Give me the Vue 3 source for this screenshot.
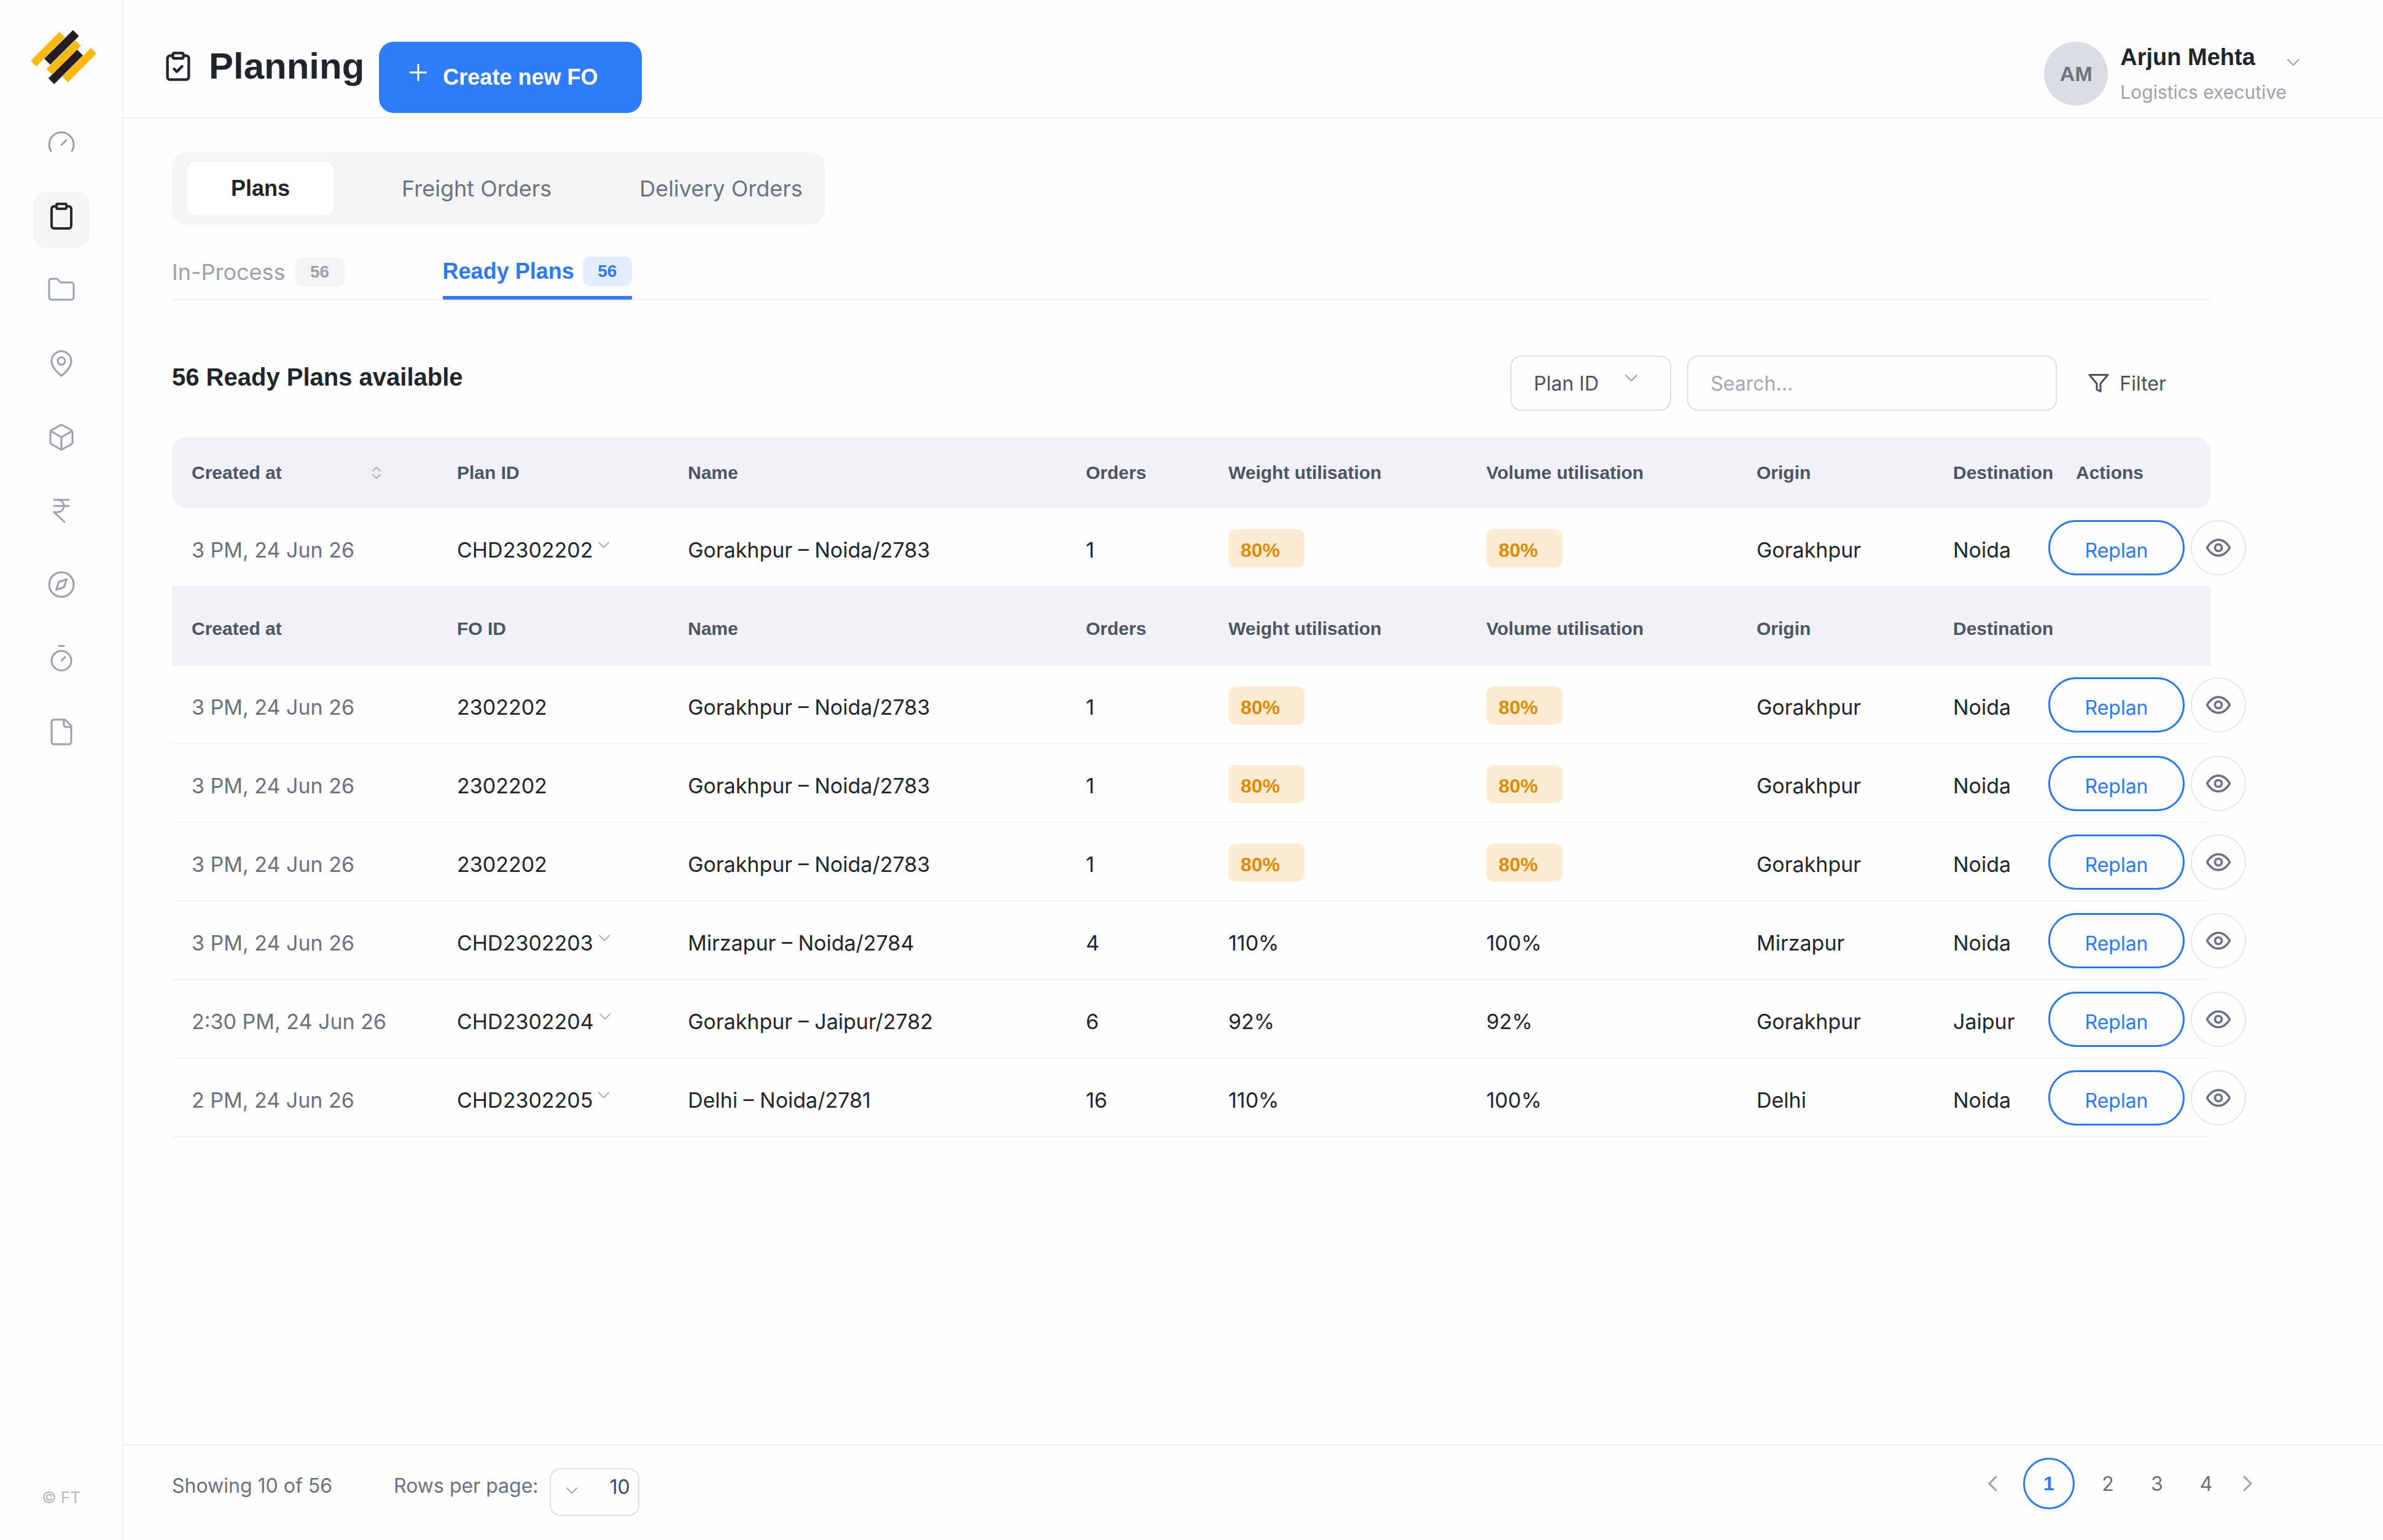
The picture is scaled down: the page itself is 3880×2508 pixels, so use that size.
<template>
  <div class="app">
    <aside class="sidebar">
      <a href="#" class="logo" aria-label="Home">
        <svg viewBox="50 45 320 263">
          <path fill="#fdb913" d="M190 54l27 26L77 222l-27-28z" />
          <path fill="#231f20" d="M256 45l29 29-140 139-29-29z" />
          <path fill="#231f20" d="M276 140l28 28-140 140-28-28z" />
          <path fill="#fdb913" d="M268 95l27 27-141 140-28-28z" />
          <path fill="#fdb913" d="M343 132l27 27-139 140-28-28z" />
        </svg>
      </a>
      <nav class="nav">
        <a
          v-for="item in navItems"
          :key="item.name"
          href="#"
          class="nav-item"
          :class="{ active: item.name === activeNav }"
          :aria-label="item.name"
          @click.prevent="activeNav = item.name"
        >
          <svg class="icon" viewBox="0 0 24 24">
            <path v-for="d in item.paths" :key="d" :d="d" />
          </svg>
        </a>
      </nav>
      <span class="copyright">© FT</span>
    </aside>

    <div class="main">
      <header class="header">
        <div class="title">
          <svg class="icon title-icon" viewBox="0 0 24 24">
            <path d="M9 2h6a1 1 0 0 1 1 1v2a1 1 0 0 1-1 1H9a1 1 0 0 1-1-1V3a1 1 0 0 1 1-1z" />
            <path d="M16 4h2a2 2 0 0 1 2 2v14a2 2 0 0 1-2 2H6a2 2 0 0 1-2-2V6a2 2 0 0 1 2-2h2" />
            <path d="M9 14l2 2 4-4" />
          </svg>
          <h1>Planning</h1>
        </div>
        <button type="button" class="create-btn">
          <svg class="plus" viewBox="0 0 28 28"><path d="M14 1v26M1 14h26" /></svg>
          Create new FO
        </button>
        <div class="user">
          <span class="avatar">AM</span>
          <div class="user-text">
            <strong>Arjun Mehta</strong>
            <span>Logistics executive</span>
          </div>
          <button type="button" class="user-toggle" aria-label="Account menu">
            <svg viewBox="0 0 22 12"><path d="M2 1l9 9 9-9" /></svg>
          </button>
        </div>
      </header>

      <main class="content">
        <div class="segments">
          <button
            v-for="s in segments"
            :key="s"
            type="button"
            :class="{ active: s === activeSegment }"
            @click="activeSegment = s"
          >{{ s }}</button>
        </div>

        <div class="tabs">
          <button
            v-for="t in tabs"
            :key="t.label"
            type="button"
            class="tab"
            :class="{ active: t.label === activeTab }"
            @click="activeTab = t.label"
          >
            {{ t.label }} <span class="count">{{ t.count }}</span>
          </button>
        </div>

        <div class="toolbar">
          <h2>56 Ready Plans available</h2>
          <div class="select-wrap">
            <select v-model="searchBy" aria-label="Search by">
              <option>Plan ID</option>
              <option>Name</option>
            </select>
            <svg viewBox="0 0 22 12"><path d="M2 1l9 9 9-9" /></svg>
          </div>
          <input v-model="search" type="text" class="search" placeholder="Search..." aria-label="Search" />
          <button type="button" class="filter-btn">
            <svg class="icon" viewBox="0 0 24 24"><path d="M22 3H2l8 9.46V19l4 2v-8.54L22 3z" /></svg>
            Filter
          </button>
        </div>

        <table class="plans">
          <colgroup>
            <col class="c-created" />
            <col class="c-id" />
            <col />
            <col class="c-orders" />
            <col class="c-weight" />
            <col class="c-volume" />
            <col class="c-origin" />
            <col class="c-dest" />
            <col class="c-actions" />
          </colgroup>
          <thead>
            <tr>
              <th>
                <span class="sortable">
                  Created at
                  <svg viewBox="0 0 16 22"><path d="M2 8l6-6 6 6M2 14l6 6 6-6" /></svg>
                </span>
              </th>
              <th>Plan ID</th>
              <th v-for="h in sharedHeads" :key="h">{{ h }}</th>
              <th class="actions-head">Actions</th>
            </tr>
          </thead>
          <tbody>
            <template v-for="plan in plans" :key="plan.id">
              <tr v-for="(row, i) in rowsOf(plan)" :key="i" :class="{ 'sub-head': row.head }">
                <template v-if="row.head">
                  <th>Created at</th>
                  <th>FO ID</th>
                  <th v-for="h in sharedHeads" :key="h">{{ h }}</th>
                  <th></th>
                </template>
                <template v-else>
                  <td class="muted">{{ row.created }}</td>
                  <td>
                    {{ row.id }}<button v-if="row.isPlan" type="button" class="expand" aria-label="Toggle freight orders" @click="plan.open = !plan.open">
                      <svg viewBox="0 0 22 12"><path d="M2 1l9 9 9-9" /></svg>
                    </button>
                  </td>
                  <td>{{ row.name }}</td>
                  <td>{{ row.orders }}</td>
                  <td :class="{ low: row.weight < 90 }"><span>{{ row.weight }}%</span></td>
                  <td :class="{ low: row.volume < 90 }"><span>{{ row.volume }}%</span></td>
                  <td>{{ row.origin }}</td>
                  <td>{{ row.destination }}</td>
                  <td class="actions-cell">
                    <div class="actions">
                      <button type="button" class="replan">Replan</button>
                      <button type="button" class="view" aria-label="View">
                        <svg class="icon" viewBox="0 0 24 24">
                          <path d="M2 12s3.5-7 10-7 10 7 10 7-3.500 7-10 7-10-7-10-7z" />
                          <circle cx="12" cy="12" r="3" />
                        </svg>
                      </button>
                    </div>
                  </td>
                </template>
              </tr>
            </template>
          </tbody>
        </table>
      </main>

      <footer class="footer">
        <div class="paging-info">
          <span>Showing 10 of 56</span>
          <label for="rows-per-page">Rows per page:</label>
          <div class="rows-wrap">
            <select id="rows-per-page" v-model="rowsPerPage">
              <option>10</option>
              <option>20</option>
            </select>
            <svg viewBox="0 0 22 12"><path d="M2 1l9 9 9-9" /></svg>
          </div>
        </div>
        <nav class="pagination" aria-label="Pages">
          <button type="button" class="step prev" aria-label="Previous page">
            <svg viewBox="0 0 16 26"><path d="M14 2L3 13l11 11" /></svg>
          </button>
          <button
            v-for="n in 4"
            :key="n"
            type="button"
            class="page"
            :class="{ current: n === page }"
            @click="page = n"
          >{{ n }}</button>
          <button type="button" class="step" aria-label="Next page">
            <svg viewBox="0 0 16 26"><path d="M2 2l11 11L2 24" /></svg>
          </button>
        </nav>
      </footer>
    </div>
  </div>
</template>

<script setup>
import { ref } from 'vue';

const activeNav = ref('Planning');
const activeSegment = ref('Plans');
const activeTab = ref('Ready Plans');
const searchBy = ref('Plan ID');
const search = ref('');
const rowsPerPage = ref('10');
const page = ref(1);

const navItems = [
  { name: 'Dashboard', paths: ['M12 14l4-4', 'M3.500 19a10 10 0 1 1 17 0'] },
  {
    name: 'Planning',
    paths: [
      'M9 2h6a1 1 0 0 1 1 1v2a1 1 0 0 1-1 1H9a1 1 0 0 1-1-1V3a1 1 0 0 1 1-1z',
      'M16 4h2a2 2 0 0 1 2 2v14a2 2 0 0 1-2 2H6a2 2 0 0 1-2-2V6a2 2 0 0 1 2-2h2'
    ]
  },
  { name: 'Documents', paths: ['M4 20h16a2 2 0 0 0 2-2V8a2 2 0 0 0-2-2h-7.930a2 2 0 0 1-1.660-.9l-.820-1.200A2 2 0 0 0 7.930 3H4a2 2 0 0 0-2 2v13a2 2 0 0 0 2 2z'] },
  { name: 'Locations', paths: ['M20 10c0 5-5.500 10-8 12-2.500-2-8-7-8-12a8 8 0 0 1 16 0z', 'M12 7a3 3 0 1 0 0 6 3 3 0 0 0 0-6z'] },
  { name: 'Inventory', paths: ['M21 8a2 2 0 0 0-1-1.730l-7-4a2 2 0 0 0-2 0l-7 4A2 2 0 0 0 3 8v8a2 2 0 0 0 1 1.730l7 4a2 2 0 0 0 2 0l7-4A2 2 0 0 0 21 16z', 'M3.300 7l8.700 5 8.700-5', 'M12 22V12'] },
  { name: 'Payments', paths: ['M6 3h12', 'M6 8h12', 'M6 13l8.500 8', 'M6 13h3c6.667 0 6.667-10 0-10'] },
  { name: 'Tracking', paths: ['M12 2a10 10 0 1 0 0 20 10 10 0 0 0 0-20z', 'M16.240 7.760l-2.120 6.360-6.360 2.120 2.120-6.360z'] },
  { name: 'Schedule', paths: ['M10 2h4', 'M12 14l3-3', 'M12 6a8 8 0 1 0 0 16 8 8 0 0 0 0-16z'] },
  { name: 'Reports', paths: ['M15 2H6a2 2 0 0 0-2 2v16a2 2 0 0 0 2 2h12a2 2 0 0 0 2-2V7z', 'M14 2v4a2 2 0 0 0 2 2h4'] }
];

const segments = ['Plans', 'Freight Orders', 'Delivery Orders'];

const tabs = [
  { label: 'In-Process', count: 56 },
  { label: 'Ready Plans', count: 56 }
];

const sharedHeads = ['Name', 'Orders', 'Weight utilisation', 'Volume utilisation', 'Origin', 'Destination'];

const freightOrder = {
  created: '3 PM, 24 Jun 26',
  id: '2302202',
  name: 'Gorakhpur – Noida/2783',
  orders: 1,
  weight: 80,
  volume: 80,
  origin: 'Gorakhpur',
  destination: 'Noida'
};

const plans = ref([
  { ...freightOrder, id: 'CHD2302202', open: true, children: [freightOrder, freightOrder, freightOrder] },
  { created: '3 PM, 24 Jun 26', id: 'CHD2302203', name: 'Mirzapur – Noida/2784', orders: 4, weight: 110, volume: 100, origin: 'Mirzapur', destination: 'Noida' },
  { created: '2:30 PM, 24 Jun 26', id: 'CHD2302204', name: 'Gorakhpur – Jaipur/2782', orders: 6, weight: 92, volume: 92, origin: 'Gorakhpur', destination: 'Jaipur' },
  { created: '2 PM, 24 Jun 26', id: 'CHD2302205', name: 'Delhi – Noida/2781', orders: 16, weight: 110, volume: 100, origin: 'Delhi', destination: 'Noida' }
]);

// plan row first, then its freight orders under their own header when open
function rowsOf(plan) {
  const rows = [{ ...plan, isPlan: true }];
  if (plan.open && plan.children) {
    rows.push({ head: true }, ...plan.children);
  }
  return rows;
}
</script>

<style>
body {
  margin: 0;
  background: #fefefe;
}
</style>

<style scoped>
.app {
  display: flex;
  min-height: 100vh;
  font-family: Inter, "Liberation Sans", sans-serif;
  font-size: 32px;
  color: #1f252b;
}

.app *,
.app {
  box-sizing: border-box;
}

button,
select,
input {
  font: inherit;
  color: inherit;
  background: none;
  border: 0;
  padding: 0;
  margin: 0;
}

button {
  cursor: pointer;
}

svg {
  display: block;
  flex: none;
  fill: none;
  stroke: currentColor;
  stroke-width: 2;
  stroke-linecap: round;
  stroke-linejoin: round;
}

h1,
h2,
strong,
th {
  font-family: "Liberation Sans", Arial, sans-serif;
  font-weight: 700;
}

/* sidebar */
.sidebar {
  display: flex;
  flex-direction: column;
  align-items: center;
  flex: none;
  width: 201px;
  padding: 49px 0;
  border-right: 2px solid #f0f0f2;
}

.logo svg {
  width: 107px;
  height: 88px;
  stroke: none;
  margin-left: 8px;
}

.nav {
  display: flex;
  flex-direction: column;
  gap: 28px;
  margin-top: 55px;
}

.nav-item {
  display: flex;
  justify-content: center;
  width: 92px;
  height: 92px;
  padding-top: 16px;
  border-radius: 22px;
  color: #9a9fb0;
}

.nav-item.active {
  background: #f4f5f6;
  color: #262a2b;
}

.nav-item svg {
  width: 48px;
  height: 48px;
  stroke-width: 1.5;
}

.nav-item.active svg {
  stroke-width: 2;
}

.copyright {
  margin-top: auto;
  font-size: 26px;
  line-height: 40px;
  color: #b8b9bd;
}

/* header */
.main {
  display: flex;
  flex-direction: column;
  flex: 1;
  min-width: 0;
}

.header {
  display: flex;
  align-items: flex-start;
  padding: 68px 135px 7px 63px;
  border-bottom: 2px solid #f0f0f2;
}

.title {
  display: flex;
  align-items: center;
  gap: 24px;
  height: 80px;
}

.title-icon {
  width: 52px;
  height: 52px;
}

h1 {
  margin: 0;
  font-size: 60px;
  line-height: 80px;
}

.create-btn {
  display: flex;
  align-items: center;
  gap: 26px;
  height: 116px;
  margin-left: 24px;
  padding: 0 72px 0 50px;
  border-radius: 24px;
  background: #2f7df6;
  color: #fff;
  font-family: "Liberation Sans", Arial, sans-serif;
  font-size: 36px;
  font-weight: 700;
}

.plus {
  width: 28px;
  height: 28px;
  margin-bottom: 16px;
  stroke-width: 3;
}

.user {
  display: flex;
  align-items: flex-start;
  margin-left: auto;
}

.avatar {
  display: flex;
  align-items: center;
  justify-content: center;
  width: 104px;
  height: 104px;
  margin-right: 20px;
  border-radius: 50%;
  background: #d9dee5;
  color: #6b7280;
  font-family: "Liberation Sans", Arial, sans-serif;
  font-size: 34px;
  font-weight: 700;
}

.user-text {
  display: flex;
  flex-direction: column;
  gap: 12px;
}

.user-text strong {
  font-size: 38px;
  line-height: 50px;
}

.user-text span {
  font-size: 30px;
  line-height: 40px;
  color: #9ca0ae;
}

.user-toggle {
  margin-top: 28px;
  color: #9ca0ae;
}

.user-toggle svg {
  width: 22px;
  height: 12px;
}

/* content */
.content {
  padding: 55px 281px 55px 79px;
}

.segments {
  display: inline-flex;
  gap: 77px;
  padding: 15px 3px 15px 24px;
  border-radius: 24px;
  background: #f4f5f7;
}

.segments button {
  height: 88px;
  padding: 0 33px;
  border-radius: 14px;
  color: #6b7280;
  font-size: 36px;
}

.segments .active {
  padding: 0 72px;
  background: #fff;
  box-shadow: 0 0 3px rgba(0, 0, 0, 0.08);
  color: #1f252b;
  font-family: "Liberation Sans", Arial, sans-serif;
  font-weight: 700;
}

.tabs {
  display: flex;
  align-items: flex-end;
  gap: 160px;
  margin-top: 52px;
  border-bottom: 2px solid #f0f1f3;
}

.tab {
  display: flex;
  align-items: center;
  gap: 16px;
  padding-bottom: 20px;
  font-size: 36px;
  line-height: 48px;
  color: #9ca0ae;
}

.tab.active {
  gap: 14px;
  margin-bottom: -1px;
  padding-bottom: 16px;
  border-bottom: 6px solid #3b78f7;
  border-radius: 2px;
  color: #2f78ee;
  font-family: "Liberation Sans", Arial, sans-serif;
  font-weight: 700;
}

.count {
  width: 80px;
  border-radius: 12px;
  background: #f3f4f5;
  font-family: "Liberation Sans", Arial, sans-serif;
  font-size: 28px;
  font-weight: 700;
  text-align: center;
}

.active .count {
  background: #e3edfd;
}

.toolbar {
  display: flex;
  align-items: flex-start;
  gap: 26px;
  margin: 90px 0 43px;
  color: #4b5060;
}

h2 {
  margin: 0 auto 0 0;
  font-size: 40px;
  line-height: 70px;
  color: #1f252b;
}

.select-wrap,
.rows-wrap {
  position: relative;
}

.select-wrap select,
.search {
  appearance: none;
  height: 90px;
  padding: 0 36px;
  border: 2px solid #dcdfe2;
  border-radius: 18px;
}

.select-wrap select {
  width: 262px;
}

.select-wrap svg {
  position: absolute;
  top: 31px;
  right: 54px;
  width: 22px;
  height: 12px;
  color: #9ca0ae;
  pointer-events: none;
}

.search {
  width: 602px;
}

.search::placeholder {
  color: #a3a7b2;
  opacity: 1;
}

.filter-btn {
  display: flex;
  align-items: center;
  gap: 16px;
  height: 90px;
  padding: 0 72px 0 24px;
}

.filter-btn svg {
  width: 36px;
  height: 36px;
}

/* table */
.plans {
  width: 100%;
  table-layout: fixed;
  border-spacing: 0;
  font-size: 34px;
  white-space: nowrap;
}

.c-created {
  width: 432px;
}

.c-id {
  width: 376px;
}

.c-orders {
  width: 232px;
}

.c-weight {
  width: 420px;
}

.c-volume {
  width: 440px;
}

.c-origin {
  width: 320px;
}

.c-dest {
  width: 187px;
}

.c-actions {
  width: 264px;
}

th {
  height: 116px;
  padding: 0 0 0 32px;
  background: #f2f1f8;
  color: #4b5565;
  font-size: 30px;
  text-align: left;
}

thead th:first-child {
  border-radius: 24px 0 0 24px;
}

thead th:last-child {
  border-radius: 0 24px 24px 0;
}

thead .actions-head {
  padding-left: 45px;
}

.sub-head th {
  height: 128px;
  padding-top: 8px;
}

.sortable {
  display: flex;
  align-items: center;
  justify-content: space-between;
  padding-right: 91px;
}

.sortable svg {
  width: 16px;
  height: 22px;
  color: #a8acb6;
}

td {
  height: 128px;
  padding: 8px 0 0 32px;
  border-bottom: 2px solid #f3f3f5;
}

.muted {
  color: #6b7080;
}

.expand {
  margin-left: 8px;
  color: #a3a7b2;
  vertical-align: 14px;
}

.expand svg {
  width: 20px;
  height: 12px;
}

.low {
  padding-top: 4px;
}

.low span {
  display: block;
  width: 124px;
  padding: 6px 0 0 20px;
  border-radius: 12px;
  background: #fdebd3;
  color: #dc8b04;
  font-family: "Liberation Sans", Arial, sans-serif;
  font-size: 32px;
  font-weight: 700;
  line-height: 56px;
}

.actions-cell {
  padding: 2px 0 0;
}

.actions {
  display: flex;
  gap: 10px;
}

.replan {
  flex: none;
  width: 222px;
  height: 90px;
  padding-top: 8px;
  border: 3px solid #2f78e8;
  border-radius: 45px;
  color: #2f78ee;
  font-size: 32px;
}

.view {
  display: flex;
  align-items: center;
  justify-content: center;
  flex: none;
  width: 90px;
  height: 90px;
  border: 2px solid #e6e8ea;
  border-radius: 50%;
  color: #6b7084;
}

.view svg {
  width: 44px;
  height: 44px;
}

/* footer */
.footer {
  display: flex;
  align-items: flex-start;
  justify-content: space-between;
  margin-top: auto;
  padding: 20px 192px 39px 79px;
  border-top: 2px solid #f0f0f2;
  color: #6b7080;
}

.paging-info {
  display: flex;
  align-items: flex-start;
  margin-top: 17px;
  line-height: 58px;
}

.paging-info label {
  margin: 0 18px 0 100px;
}

.rows-wrap select {
  appearance: none;
  display: block;
  width: 146px;
  height: 78px;
  padding: 0 0 20px 96px;
  border: 2px solid #dcdfe2;
  border-radius: 18px;
  color: #3f4656;
}

.rows-wrap svg {
  position: absolute;
  top: 31px;
  left: 26px;
  width: 20px;
  height: 12px;
  color: #9ca0ae;
  pointer-events: none;
}

.pagination {
  display: flex;
  align-items: center;
}

.step {
  display: flex;
  align-items: center;
  justify-content: center;
  width: 56px;
  height: 84px;
  color: #9a9eac;
}

.step svg {
  width: 16px;
  height: 26px;
  stroke-width: 3;
}

.prev {
  margin-right: 22px;
}

.page {
  width: 80px;
  height: 84px;
}

.page.current {
  width: 84px;
  margin-right: 14px;
  border: 3px solid #2f78ee;
  border-radius: 50%;
  color: #2f78ee;
  font-family: "Liberation Sans", Arial, sans-serif;
  font-weight: 700;
}
</style>
